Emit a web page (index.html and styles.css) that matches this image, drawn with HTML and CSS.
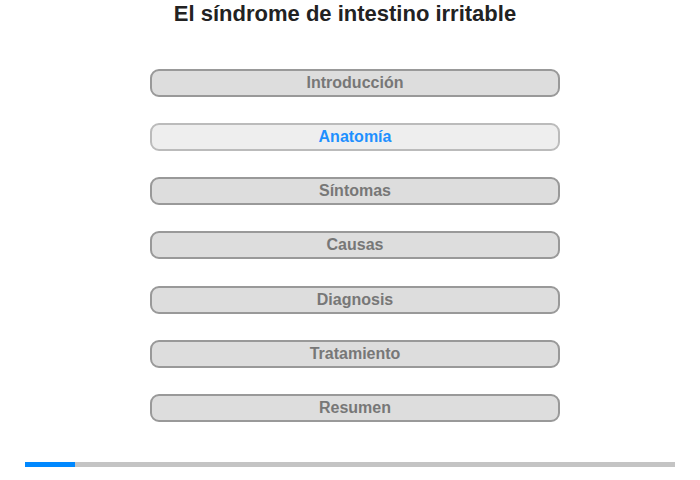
FILE: index.html
```html
<!DOCTYPE html>
<html lang="es">
<head>
<meta charset="utf-8">
<link rel="stylesheet" href="styles.css">
</head>
<body>
<div class="page">
  <h1 class="title">El síndrome de intestino irritable</h1>
  <nav class="menu">
    <div class="item">Introducción</div>
    <div class="item active">Anatomía</div>
    <div class="item">Síntomas</div>
    <div class="item">Causas</div>
    <div class="item">Diagnosis</div>
    <div class="item">Tratamiento</div>
    <div class="item">Resumen</div>
  </nav>
  <div class="progress"><div class="progress-fill" style="width:50px"></div></div>
</div>
</body>
</html>
```
FILE: styles.css
```css
html, body {
  margin: 0;
  padding: 0;
  background: #fff;
}
body {
  font-family: "Liberation Sans", Arial, sans-serif;
  width: 700px;
  height: 480px;
  overflow: hidden;
}
.page {
  display: flex;
  flex-direction: column;
}
.title {
  margin: 0;
  padding-top: 1px;
  padding-right: 10px;
  height: 27px;
  font-size: 22px;
  line-height: 25px;
  font-weight: bold;
  color: #222;
  text-align: center;
}
.menu {
  margin-top: 41px;
  padding-left: 150px;
  display: flex;
  flex-direction: column;
  gap: 26.17px;
}
.item {
  box-sizing: border-box;
  width: 410px;
  height: 28px;
  border: 2px solid #999;
  border-radius: 9px;
  background: #ddd;
  color: #777;
  font-size: 16px;
  font-weight: bold;
  line-height: 24px;
  text-align: center;
}
.item.active {
  background: #eee;
  border-color: #bbb;
  color: #1e90ff;
}
.progress {
  margin: 40px 25px 0;
  height: 5px;
  background: #c4c4c4;
}
.progress-fill {
  height: 100%;
  background: #0088ff;
}
```
